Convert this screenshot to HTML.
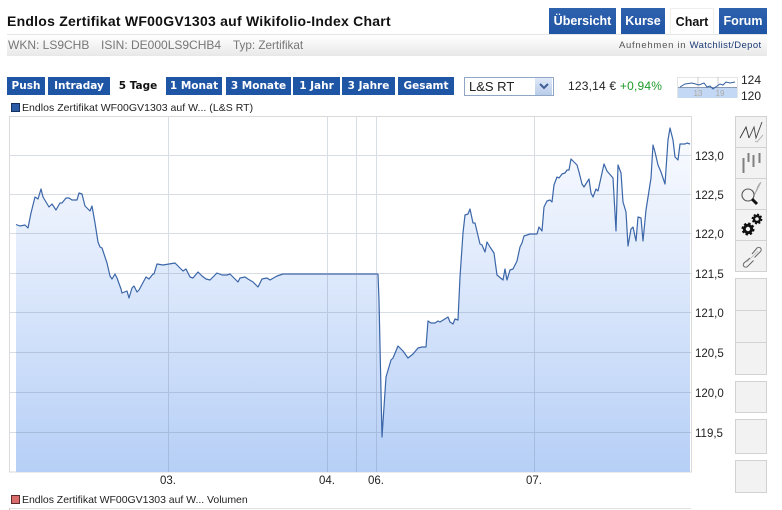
<!DOCTYPE html>
<html><head><meta charset="utf-8"><style>
html,body{margin:0;padding:0;background:#fff}
body{width:782px;height:510px;position:relative;overflow:hidden;font-family:"Liberation Sans",sans-serif;color:#111}
.a{position:absolute;white-space:nowrap}
.tab{position:absolute;top:8px;height:26px;line-height:27px;background:linear-gradient(#2f62ad,#1f55a5);color:#fff;font-weight:bold;font-size:12.5px;text-align:center}
.p{position:absolute;top:77px;height:18px;line-height:18px;background:#1f55a5;color:#fff;font-family:"DejaVu Sans",sans-serif;font-weight:bold;font-size:10.5px;text-align:center}
.t{position:absolute;left:735px;width:30px;background:#f2f2f2;border:1px solid #d2d2d2}
.y{position:absolute;left:695px;font-size:11.5px;line-height:14px;color:#222}
.x{position:absolute;top:474px;width:30px;text-align:center;font-size:11.5px;line-height:14px;color:#222}
</style></head><body>
<div class="a" style="left:7px;top:13px;font-size:14px;font-weight:bold;letter-spacing:.24px;line-height:16px;color:#111">Endlos Zertifikat WF00GV1303 auf Wikifolio-Index Chart</div>
<div class="a" style="left:7px;top:34px;width:760px;height:22px;background:linear-gradient(#fff,#e8e8e8);border-top:1px solid #e4e4e4;box-sizing:border-box"></div>
<div class="a" style="left:8px;top:38px;font-size:12px;line-height:15px;color:#777">WKN: LS9CHB</div>
<div class="a" style="left:101px;top:38px;font-size:12px;line-height:15px;color:#777">ISIN: DE000LS9CHB4</div>
<div class="a" style="left:233px;top:38px;font-size:11.7px;line-height:15px;color:#777">Typ: Zertifikat</div>
<div class="a" style="left:619px;top:40px;font-size:9.5px;letter-spacing:.72px;line-height:12px;color:#555">Aufnehmen in <span style="color:#1c3a75;letter-spacing:.38px">Watchlist/Depot</span></div>
<div class="tab" style="left:549px;width:67px">Übersicht</div>
<div class="tab" style="left:621px;width:44px">Kurse</div>
<div class="tab" style="left:670px;width:44px;top:8px;background:#fff;color:#111;border:1px solid #eee;border-bottom:0;box-sizing:border-box;line-height:27px">Chart</div>
<div class="tab" style="left:719px;width:48px">Forum</div>

<div class="p" style="left:7px;width:38px">Push</div>
<div class="p" style="left:48px;width:62px">Intraday</div>
<div class="p" style="left:112px;width:52px;background:#fff;color:#111">5 Tage</div>
<div class="p" style="left:166px;width:56px">1 Monat</div>
<div class="p" style="left:226px;width:65px">3 Monate</div>
<div class="p" style="left:293px;width:47px">1 Jahr</div>
<div class="p" style="left:342px;width:53px">3 Jahre</div>
<div class="p" style="left:398px;width:56px">Gesamt</div>

<div class="a" style="left:464px;top:77px;width:90px;height:19px;border:1px solid #8fa6c4;box-sizing:border-box;background:#fff"></div>
<div class="a" style="left:469px;top:78px;font-size:13px;line-height:17px;color:#222">L&amp;S RT</div>
<div class="a" style="left:535px;top:78px;width:17px;height:17px;background:linear-gradient(#dfe8f7,#b9cdea)"></div>
<svg class="a" style="left:539px;top:83px" width="10" height="7"><path d="M1 1l4 4 4-4" fill="none" stroke="#3f5f96" stroke-width="2"/></svg>
<div class="a" style="left:568px;top:79px;font-size:12px;letter-spacing:.2px;line-height:15px;color:#222">123,14 € <span style="color:#1e9b2a">+0,94%</span></div>
<svg class="a" style="left:677px;top:76px" width="61" height="23">
<rect x="0.5" y="1.5" width="60" height="20" fill="#fff" stroke="#e4e4e4"/>
<rect x="1" y="12" width="59" height="10" fill="#c3d8f5"/>
<path d="M21 1v21M41 1v21" stroke="#ccc" fill="none"/>
<path d="M1 11.5h59" stroke="#8a9ab5" fill="none"/>
<path d="M3 11l5-3 7-1 7 2 5-2 3 4 3-1 3 3 4-3 3-2 3 1 3-3 4 1 5-1" fill="none" stroke="#34609f"/>
<text x="21" y="20" font-size="8" fill="#aaa" text-anchor="middle" font-family="Liberation Sans">13</text>
<text x="43" y="20" font-size="8" fill="#aaa" text-anchor="middle" font-family="Liberation Sans">19</text>
</svg>
<div class="a" style="left:741px;top:73px;font-size:12px;line-height:14px;color:#222">124</div>
<div class="a" style="left:741px;top:89px;font-size:12px;line-height:14px;color:#222">120</div>

<div class="a" style="left:11px;top:103px;width:7px;height:7px;background:#2c5ba6;border:1px solid #17305e"></div>
<div class="a" style="left:22px;top:102px;font-size:10.5px;line-height:13px;letter-spacing:.03px;color:#222">Endlos Zertifikat WF00GV1303 auf W... (L&amp;S RT)</div>

<svg class="a" style="left:0;top:110px" width="700" height="370" viewBox="0 110 700 370">
<defs><linearGradient id="g" gradientUnits="userSpaceOnUse" x1="0" y1="128" x2="0" y2="472"><stop offset="0" stop-color="#fbfcff"/><stop offset="1" stop-color="#b6cff6"/></linearGradient></defs>
<rect x="9.5" y="116.5" width="682" height="355.5" fill="#fff" stroke="#dadada"/>
<path fill="url(#g)" d="M16 472V224.5L20 226 25 225 28 228 31 213 35 197 38 199 41 189 43 197 49 207 52 204 56 210 60 203 62 203 66 198 69 198 72 200 77 200 79 193 82 194 85 206 90 211 92 206 95 223 98 242 100 247 102 248 107 263 110 276 112 279 115 274 117 278 121 289 122 293 127 291 129 298 132 288 134 286 137 292 139 290 146 277 149 279 153 274 154 274 157 264 163 265 175 263 180 268 183 271 186 269 190 277 193 278 198 272 202 276 206 279 210 280 217 273 222 275 227 275 230 274 238 282 240 278 245 277 248 279 253 282 258 287 262 279 267 278 270 280 277 276 283 274 378 274 379 300 382 437 386 377 391 360 393 358 398 346 403 351 408 358 413 354 418 348 422 347 426 347 428 321 431 323 435 323 438 321 440 322 448 317 450 322 453 324 455 319 458 320 460 277 463 233 465 215 468 214 470 209 473 223 475 223 480 244 482 245 485 252 487 242 490 247 494 253 497 275 503 280 505 269 507 280 510 270 513 269 517 261 520 247 522 243 524 236 527 235 530 234 537 234 539 227 542 231 544 207 547 201 550 200 552 202 554 185 557 177 559 178 562 174 565 173 567 170 569 170 571 159 577 165 579 172 582 184 584 187 589 179 591 193 593 197 596 189 598 191 604 164 607 171 613 178 616 231 618 165 621 173 623 202 626 212 628 246 631 229 633 227 636 241 638 217 641 218 643 241 646 210 651 178 653 145 655 152 658 165 661 172 665 184 668 140 670 128 673 140 675 157 678 160 680 144 685 144 687 143 690 144V472Z"/>
<path d="M10 155.5H691M10 194.5H691M10 233.5H691M10 273.5H691M10 312.5H691M10 352.5H691M10 392.5H691M10 432.5H691M168.5 117V472M327.5 117V472M356.5 117V472M376.5 117V472M534.5 117V472" stroke="#6f7f9f" stroke-opacity=".27" fill="none"/>
<path fill="none" stroke="#3b66a8" stroke-width="1.2" stroke-linejoin="round" d="M16 224.5L20 226 25 225 28 228 31 213 35 197 38 199 41 189 43 197 49 207 52 204 56 210 60 203 62 203 66 198 69 198 72 200 77 200 79 193 82 194 85 206 90 211 92 206 95 223 98 242 100 247 102 248 107 263 110 276 112 279 115 274 117 278 121 289 122 293 127 291 129 298 132 288 134 286 137 292 139 290 146 277 149 279 153 274 154 274 157 264 163 265 175 263 180 268 183 271 186 269 190 277 193 278 198 272 202 276 206 279 210 280 217 273 222 275 227 275 230 274 238 282 240 278 245 277 248 279 253 282 258 287 262 279 267 278 270 280 277 276 283 274"/>
<path fill="none" stroke="#7d96c4" stroke-width="2" d="M283 274H378"/>
<path fill="none" stroke="#3b66a8" stroke-width="1.2" stroke-linejoin="round" d="M378 274L379 300 382 437 386 377 391 360 393 358 398 346 403 351 408 358 413 354 418 348 422 347 426 347 428 321 431 323 435 323 438 321 440 322 448 317 450 322 453 324 455 319 458 320 460 277 463 233 465 215 468 214 470 209 473 223 475 223 480 244 482 245 485 252 487 242 490 247 494 253 497 275 503 280 505 269 507 280 510 270 513 269 517 261 520 247 522 243 524 236 527 235 530 234 537 234 539 227 542 231 544 207 547 201 550 200 552 202 554 185 557 177 559 178 562 174 565 173 567 170 569 170 571 159 577 165 579 172 582 184 584 187 589 179 591 193 593 197 596 189 598 191 604 164 607 171 613 178 616 231 618 165 621 173 623 202 626 212 628 246 631 229 633 227 636 241 638 217 641 218 643 241 646 210 651 178 653 145 655 152 658 165 661 172 665 184 668 140 670 128 673 140 675 157 678 160 680 144 685 144 687 143 690 144"/>
</svg>

<div class="y" style="top:150px">123,0</div>
<div class="y" style="top:189px">122,5</div>
<div class="y" style="top:228px">122,0</div>
<div class="y" style="top:268px">121,5</div>
<div class="y" style="top:307px">121,0</div>
<div class="y" style="top:347px">120,5</div>
<div class="y" style="top:387px">120,0</div>
<div class="y" style="top:427px">119,5</div>
<div class="x" style="left:153px">03.</div>
<div class="x" style="left:312px">04.</div>
<div class="x" style="left:361px">06.</div>
<div class="x" style="left:519px">07.</div>

<div class="a" style="left:11px;top:495px;width:7px;height:7px;background:#d96b6b;border:1px solid #5c2b2b"></div>
<div class="a" style="left:22px;top:494px;font-size:10.5px;line-height:13px;letter-spacing:-.03px;color:#222">Endlos Zertifikat WF00GV1303 auf W... Volumen</div>
<div class="a" style="left:9px;top:508px;width:682px;height:2px;border-top:1px solid #e2e2e2;border-left:1px solid #e8b5b5;box-sizing:border-box"></div>

<div class="t" style="top:116px;height:30px"></div>
<div class="t" style="top:147px;height:30px"></div>
<div class="t" style="top:178px;height:30px"></div>
<div class="t" style="top:209px;height:30px"></div>
<div class="t" style="top:240px;height:30px"></div>
<div class="t" style="top:278px;height:31px"></div>
<div class="t" style="top:310px;height:31px"></div>
<div class="t" style="top:342px;height:31px"></div>
<div class="t" style="top:381px;height:30px"></div>
<div class="t" style="top:419px;height:33px"></div>
<div class="t" style="top:460px;height:31px"></div>
<svg class="a" style="left:735px;top:116px" width="32" height="160" viewBox="735 116 32 160">
<path d="M749 138l5-11 2 11 6-16" fill="none" stroke="#444" stroke-width=".9"/>
<path d="M740 138l6-11 3 11" fill="none" stroke="#333" stroke-width=".9"/>
<path d="M755 141l2 1 6-7" fill="none" stroke="#aaa" stroke-width=".9"/>
<path d="M743.5 158v15M748.5 153v9M753.5 155v12M759.5 153v10" stroke="#808080" stroke-width="2" fill="none"/>
<path d="M752 190l3 4 3-8 2-3M756 192l3-6 2-4" fill="none" stroke="#aaa" stroke-width=".9"/>
<circle cx="748" cy="195" r="6" fill="none" stroke="#555" stroke-width="1.1"/>
<path d="M752 199l5 5" stroke="#111" stroke-width="3"/>
<circle cx="748" cy="229" r="3.7" fill="none" stroke="#111" stroke-width="3"/>
<circle cx="748" cy="229" r="5.6" fill="none" stroke="#111" stroke-width="1.8" stroke-dasharray="2.4 2"/>
<circle cx="757" cy="219" r="3" fill="none" stroke="#111" stroke-width="2.4"/>
<circle cx="757" cy="219" r="4.6" fill="none" stroke="#111" stroke-width="1.6" stroke-dasharray="2 1.6"/>
<path d="M750 258l-6 5a2.6 2.6 0 0 0 0 3.5 2.6 2.6 0 0 0 3.5 0l6-6M752 254l5-6a2.6 2.6 0 0 1 3.5 0 2.6 2.6 0 0 1 0 3.5l-6 6" fill="none" stroke="#666"/>
<path d="M747 262l11-11" fill="none" stroke="#bbb" stroke-width=".8"/>
</svg>
</body></html>
